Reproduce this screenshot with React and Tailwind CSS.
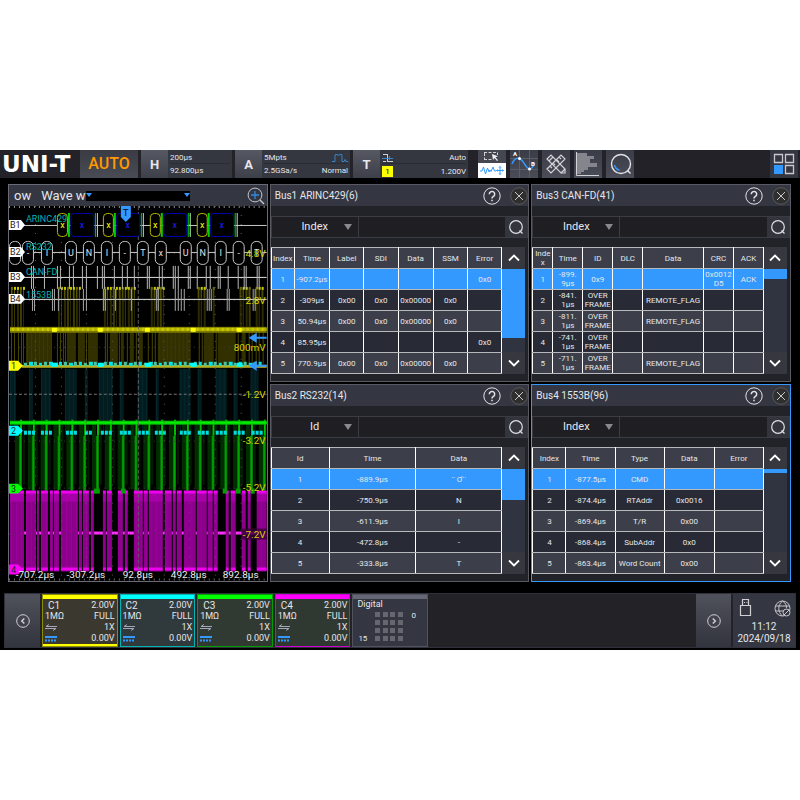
import { useState } from 'react'

const PANELS = [
  {
    title: 'Bus1 ARINC429(6)',
    filter: 'Index',
    cols: ['w-[23px]', 'w-[35px]', 'w-[34px]', 'w-[34px]', 'w-[35px]', 'w-[34px]', 'w-[34px]'],
    head: ['Index', 'Time', 'Label', 'SDI', 'Data', 'SSM', 'Error'],
    rows: [
      ['1', '-907.2μs', '', '', '', '', '0x0'],
      ['2', '-309μs', '0x00', '0x0', '0x00000', '0x0', ''],
      ['3', '50.94μs', '0x00', '0x0', '0x00000', '0x0', ''],
      ['4', '85.95μs', '', '', '', '', '0x0'],
      ['5', '770.9μs', '0x00', '0x0', '0x00000', '0x0', ''],
    ],
    thumb: 'h-[69px]',
  },
  {
    title: 'Bus3 CAN-FD(41)',
    filter: 'Index',
    cols: ['w-[20px]', 'w-[30px]', 'w-[30px]', 'w-[30px]', 'w-[61px]', 'w-[30px]', 'w-[30px]'],
    head: ['Inde\nx', 'Time', 'ID', 'DLC', 'Data', 'CRC', 'ACK'],
    rows: [
      ['1', '-899.\n9μs', '0x9', '', '', '0x0012\nD5', 'ACK'],
      ['2', '-841.\n1μs', 'OVER\nFRAME', '', 'REMOTE_FLAG', '', ''],
      ['3', '-811.\n1μs', 'OVER\nFRAME', '', 'REMOTE_FLAG', '', ''],
      ['4', '-741.\n1μs', 'OVER\nFRAME', '', '', '', ''],
      ['5', '-711.\n1μs', 'OVER\nFRAME', '', 'REMOTE_FLAG', '', ''],
    ],
    thumb: 'h-[10px]',
  },
  {
    title: 'Bus2 RS232(14)',
    filter: 'Id',
    cols: ['w-[58px]', 'w-[87px]', 'w-[86px]'],
    head: ['Id', 'Time', 'Data'],
    rows: [
      ['1', '-889.9μs', '¨ Ơ˙˙'],
      ['2', '-750.9μs', 'N'],
      ['3', '-611.9μs', 'I'],
      ['4', '-472.8μs', '-'],
      ['5', '-333.8μs', 'T'],
    ],
    thumb: 'h-[31px]',
  },
  {
    title: 'Bus4 1553B(96)',
    filter: 'Index',
    active: true,
    cols: ['w-[33px]', 'w-[49px]', 'w-[49px]', 'w-[50px]', 'w-[49px]'],
    head: ['Index', 'Time', 'Type', 'Data', 'Error'],
    rows: [
      ['1', '-877.5μs', 'CMD', '', ''],
      ['2', '-874.4μs', 'RTAddr', '0x0016', ''],
      ['3', '-869.4μs', 'T/R', '0x00', ''],
      ['4', '-868.4μs', 'SubAddr', '0x0', ''],
      ['5', '-863.4μs', 'Word Count', '0x00', ''],
    ],
    thumb: 'h-[4px]',
  },
]

const CHANNELS = [
  { name: 'C1', border: 'border-[#8c8c00]', bar: 'bg-[#ffff00]', bg: 'bg-[#3a382f]', selected: true },
  { name: 'C2', border: 'border-[#00b4b4]', bar: 'bg-[#00ffff]', bg: 'bg-[#30393c]' },
  { name: 'C3', border: 'border-[#00a000]', bar: 'bg-[#00ff00]', bg: 'bg-[#313a32]' },
  { name: 'C4', border: 'border-[#d000d0]', bar: 'bg-[#ff00ff]', bg: 'bg-[#303832]' },
]

// ---- trace data, in screen units of the plot ----
const WORDS = [57, 103, 150, 197]
const UART = [
  [9, ''], [22, '-'], [41, 'I'], [65, 'U'], [83, 'N'], [101, 'I'], [119, '-'],
  [137, 'T'], [155, 'x'], [180, 'U'], [197, 'N'], [215, 'I'], [233, '-'], [251, 'T'],
]
const CAN = [31, 33, 44, 57, 60, 69, 73, 82, 86, 97, 102, 104, 114, 122, 127, 134, 147, 149, 159, 162, 173, 175, 178, 188, 190, 197, 206, 210, 218, 220, 228, 238, 244, 246, 257, 259]
const MIL = [32, 34, 52, 54, 58, 83, 86, 103, 105, 115, 131, 156, 158, 175, 178, 181, 184, 207, 209, 211, 227, 229, 253, 255]
const BURSTS = [[11, 26], [58, 81], [104, 135], [151, 166], [198, 206], [213, 214], [240, 252], [256, 265]]
const C1_FILL = [[26, 52], [67, 76], [78, 85], [88, 98], [110, 118], [121, 124], [130, 134], [139, 143], [158, 191], [204, 214], [218, 236], [242, 246]]
const C1_LINES = [11, 14, 18, 21, 23, 57, 60, 63, 65, 86, 105, 107, 119, 127, 136, 148, 152, 155, 199, 202, 216, 238, 249, 252, 256, 259, 263]
const C2_FILL = [[10, 16], [29, 33], [41, 51], [65, 77], [85, 88], [99, 113], [120, 124], [138, 148], [156, 159], [180, 191], [198, 202], [216, 227], [234, 238], [251, 259]]
const C2_DASH = [[24, 33], [41, 51], [66, 76], [85, 93], [101, 112], [120, 130], [138, 147], [155, 165], [180, 191], [198, 208], [216, 226], [234, 243], [252, 261]]
const C4_GAPS = [[24, 26], [36, 37], [39, 41], [48, 50], [53, 54], [59, 61], [78, 79], [82, 83], [89, 91], [94, 103], [106, 107], [112, 118], [123, 125], [128, 134], [143, 144], [148, 149], [163, 165], [172, 173], [176, 177], [182, 184], [196, 197], [207, 208], [213, 214], [218, 226], [229, 231], [236, 242], [246, 248], [251, 257]]

const steps = (from, to, step) => {
  const out = []
  for (let x = from; x < to; x += step) out.push(x)
  return out
}

function Trace() {
  return (
    <svg viewBox="9 206 258 375" className="block h-auto w-full bg-black font-[Roboto,sans-serif]" role="img" aria-label="Waveform">
      {/* yellow channel */}
      {BURSTS.map(([a, b]) =>
        steps(a, b, 3).map((x, i) => (
          <g key={x}>
            <rect x={x} y="288" width={i % 3 === 1 ? 1 : 2} height="39" fill={i % 2 ? '#3d3b00' : '#2b2a00'} />
            <rect x={x} y="287" width="2" height="3" fill={i % 3 ? '#c8c800' : '#6c6c00'} />
            <rect x={x} y="290" width="1" height="8" fill="#5c5a00" />
          </g>
        ))
      )}
      {C1_FILL.map(([a, b]) => <rect key={a} x={a} y="333" width={b - a} height="31" fill="#333000" />)}
      {C1_LINES.map((x) => <rect key={x} x={x} y="333" width="1" height="31" fill="#4a4700" />)}
      {steps(27, 52, 4).map((x) => <rect key={x} x={x} y="333" width="1" height="31" fill="#3d3a00" />)}
      {steps(159, 191, 4).map((x) => <rect key={x} x={x} y="333" width="1" height="31" fill="#3d3a00" />)}
      <rect x="10" y="327" width="257" height="6" fill="#7c7a00" />
      <rect x="10" y="328" width="257" height="3" fill="#b4b200" />
      {steps(12, 266, 5).map((x) => <rect key={x} x={x} y="328" width="2" height="3" fill="#cccb00" />)}
      {[52, 98, 145, 191, 237].map((x) => <rect key={x} x={x} y="328" width="5" height="4" fill="#ffff00" />)}

      {/* cyan channel */}
      {C2_FILL.map(([a, b]) => <rect key={a} x={a} y="369" width={b - a} height="52" fill="#031c20" />)}
      {C2_FILL.map(([a, b]) => steps(a, b, 4).map((x) => <rect key={x} x={x} y="369" width="1" height="65" fill="#05282d" />))}
      <rect x="22" y="365" width="245" height="3" fill="#b5ae20" />
      {steps(24, 264, 5).map((x, i) => (
        <rect key={x} x={x} y={i % 3 ? 362 : 363} width={i % 4 === 1 ? 4 : 3} height={i % 3 ? 4 : 3} fill={i % 2 ? '#00e5e5' : '#48c4a0'} />
      ))}
      {[52, 98, 145, 191, 237].map((x) => <rect key={x} x={x} y="363" width="6" height="4" fill="#00ffff" />)}

      {/* green channel */}
      {steps(15, 266, 12.85).map((x) => (
        <g key={x}>
          <rect x={x} y="424" width="4" height="66" fill="#002e00" />
          <rect x={x + 8} y="425" width="2" height="60" fill="#001c00" />
          <rect x={x + 5} y="420" width="2" height="16" fill="#00c000" />
          <rect x={x + 4} y="436" width="3" height="55" fill="#008400" />
          <rect x={x + 5} y="436" width="1" height="56" fill="#00a800" />
        </g>
      ))}
      <rect x="10" y="421" width="257" height="4" fill="#00b800" />
      <rect x="10" y="422" width="257" height="2" fill="#00f000" />
      {C2_DASH.map(([a, b]) => steps(a, b, 4).map((x) => <rect key={x} x={x} y="431" width="3" height="4" fill="#00dede" />))}

      {/* magenta channel */}
      <rect x="10" y="491" width="257" height="81" fill="#8c008c" />
      {steps(11, 266, 5).map((x) => <rect key={x} x={x} y="494" width="1" height="74" fill="#9a009a" />)}
      <rect x="10" y="494" width="257" height="8" fill="#a800a8" />
      <rect x="10" y="491" width="257" height="3" fill="#f000f0" />
      <rect x="10" y="568" width="257" height="3" fill="#f000f0" />
      {C4_GAPS.map(([a, b]) => (
        <g key={a}>
          <rect x={a} y="490" width={b - a} height="83" fill="#000" />
          <rect x={a} y="532" width={b - a} height="3" fill="#ff30ff" />
        </g>
      ))}
      {[[94, 100], [121, 126], [223, 227], [236, 241], [251, 255]].map(([a, b]) => (
        <rect key={a} x={a} y="489" width={b - a} height="5" fill="#00a000" />
      ))}

      {/* graticule */}
      <g fill="none" stroke="#8a8a8a" strokeWidth="1">
        <path d="M9 207H267" strokeWidth="2" strokeDasharray="1 4" />
        <path d="M9 580H267" strokeWidth="2" strokeDasharray="1 4" stroke="#666" />
        <path d="M9 394.500H267" strokeDasharray="3 2" stroke="#747474" />
        <path d="M138.500 206V581" strokeDasharray="4 2" stroke="#5e5e5e" />
        {[253, 300, 347, 441, 488, 534].map((y) => (
          <path key={y} d={`M9 ${y}.5H267`} strokeDasharray="1 4" stroke="#3c3c3c" />
        ))}
        {[35, 61, 86, 112, 164, 189, 215, 241].map((x) => (
          <path key={x} d={`M${x}.5 206V581`} strokeDasharray="1 8" stroke="#5c5c5c" />
        ))}
      </g>

      {/* bus 1 */}
      <path d="M22 225.500H267" stroke="#c8c8c8" />
      {WORDS.map((x) => (
        <g key={x} fill="#000" fontSize="9" textAnchor="middle">
          <rect x={x + 0.5} y="213.500" width="10" height="23" rx="4" stroke="#b8b800" />
          <rect x={x + 14} y="213.500" width="23" height="23" rx="3" stroke="#0000b0" />
          <rect x={x + 11} y="213" width="2" height="24" fill="#00d000" />
          <rect x={x + 38} y="213" width="1" height="24" fill="#00d000" />
          <rect x={x + 40} y="213" width="1" height="24" fill="#b0e8b0" />
          <text x={x + 5.5} y="228" fill="#ffff00">x</text>
          <text x={x + 25} y="228" fill="#2020ff">x</text>
        </g>
      ))}

      {/* bus 2 */}
      <path d="M22 252.500H267" stroke="#c8c8c8" />
      {UART.map(([x, ch]) => (
        <g key={x}>
          <rect x={x + 0.5} y="241.500" width="11" height="23" rx="5" fill="#000" stroke="#c8c8c8" />
          <text x={x + 6} y="256" fill="#e0e0e0" fontSize="9" textAnchor="middle">{ch}</text>
        </g>
      ))}

      {/* bus 3 and 4 */}
      <rect x="22" y="277" width="245" height="1" fill="#e0e0e0" />
      {CAN.map((x) => <rect key={x} x={x} y="266" width="1" height="23" fill="#b8b8b8" />)}
      <rect x="22" y="299" width="245" height="1" fill="#e0e0e0" />
      {MIL.map((x) => <rect key={x} x={x} y="289" width="1" height="22" fill="#a8a8a8" />)}

      <g fill="#00b4b4" fontSize="9">
        <text x="26" y="222">ARINC429</text>
        <text x="26" y="250">RS232</text>
        <text x="26" y="275">CAN-FD</text>
        <text x="26" y="298">1553B</text>
      </g>
      {[225, 252, 277, 299].map((y, i) => (
        <g key={y}>
          <path d={`M9 ${y - 5}h12l4 5l-4 5H9z`} fill="#fff" />
          <text x="10" y={y + 3} fontSize="9" fill="#222">B{i + 1}</text>
        </g>
      ))}
      {[[366, '#ffff00'], [431, '#00ffff'], [489, '#00ff00'], [570, '#ff00ff']].map(([y, fill], i) => (
        <g key={y}>
          <path d={`M9 ${y - 5}h9l5 5l-5 5H9z`} fill={fill} />
          <text x="11" y={y + 3} fontSize="9" fill="#222">{i + 1}</text>
        </g>
      ))}

      {/* trigger */}
      <path d="M121 206h10v11l-5 5l-5-5z" fill="#3399ff" />
      <text x="126" y="216" fontSize="10" fill="#111" textAnchor="middle">T</text>
      {[338, 366].map((y) => (
        <path key={y} d={`M249 ${y}l8-5v4h10v2h-10v4z`} fill="#3399ff" />
      ))}

      <rect x="242" y="529" width="25" height="11" fill="#380038" opacity="0.800" />
      <g fill="#d8d400" fontSize="10" textAnchor="end">
        <text x="266" y="257">4.8V</text>
        <text x="266" y="304">2.8V</text>
        <text x="266" y="351">800mV</text>
        <text x="266" y="398">-1.2V</text>
        <text x="266" y="444">-3.2V</text>
        <text x="266" y="491">-5.2V</text>
        <text x="266" y="538">-7.2V</text>
      </g>
      <g fill="#f0f0f0" fontSize="10" textAnchor="middle">
        <text x="35" y="579">-707.2μs</text>
        <text x="86" y="579">-307.2μs</text>
        <text x="138" y="579">92.8μs</text>
        <text x="189" y="579">492.8μs</text>
        <text x="241" y="579">892.8μs</text>
      </g>
    </svg>
  )
}

function WavePanel() {
  return (
    <section className="row-span-2 border border-[#6a6b75] bg-black">
      <header className="flex h-[21px] items-center bg-[#343641] pr-0.5 pl-[5px] text-[13px] text-gray-200">
        <span className="mr-[10px]">ow</span>
        <span>Wave w</span>
        <div className="flex h-[10px] w-[104px] items-start justify-between bg-black pt-0.5">
          <svg className="h-1 w-[6px]" viewBox="0 0 6 4"><path d="M0 0h6L3 4z" fill="#3399ff" /></svg>
          <svg className="h-1 w-[6px]" viewBox="0 0 6 4"><path d="M0 0h6L3 4z" fill="#3399ff" /></svg>
        </div>
        <button type="button" aria-label="Zoom" className="ml-auto">
          <svg className="block size-[18px]" viewBox="0 0 18 18" fill="none" stroke="#c4c6cc">
            <circle cx="8" cy="8" r="6.900" />
            <path d="M13 13l4 4" strokeWidth="1.500" />
            <path d="M8 4v8M4 8h8" stroke="#2f8ae0" strokeWidth="1.300" />
          </svg>
        </button>
      </header>
      <Trace />
    </section>
  )
}

function BusPanel({ panel }) {
  const [filter, setFilter] = useState(panel.filter)
  const [query, setQuery] = useState('')

  return (
    <section className={`min-w-0 border bg-[#222229] pb-[7px] ${panel.active ? 'border-[#3399ff]' : 'border-[#585962]'}`}>
      <header className="flex h-[21px] items-center bg-[#343641] pl-1">
        <h2 className="text-[10px] whitespace-nowrap text-gray-200">{panel.title}</h2>
        <button type="button" aria-label="Help" className="mr-[9px] ml-auto">
          <svg className="block size-[18px]" viewBox="0 0 18 18" fill="none" stroke="#e4e4e8">
            <circle cx="9" cy="9" r="8.200" />
            <path d="M6.300 7.200a2.700 2.700 0 1 1 4.300 2.100c-1 .7-1.600 1-1.600 2.100M9 12.700v1.500" strokeWidth="1.500" />
          </svg>
        </button>
        <button type="button" aria-label="Close">
          <svg className="block size-[18px]" viewBox="0 0 18 18">
            <circle cx="9" cy="9" r="8.300" fill="#302f2f" stroke="#5a5958" />
            <path d="M5 5l8 8M13 5l-8 8" stroke="#c8c8c8" />
          </svg>
        </button>
      </header>

      <div className="mt-[10px] flex h-[22px] border border-[#3b3c43] bg-[#1f1e22]">
        <div className="relative w-[87px] border-r border-[#3b3c43]">
          <select
            aria-label="Search column"
            value={filter}
            onChange={(event) => setFilter(event.target.value)}
            className="block size-full appearance-none text-center text-[11px] text-gray-200 outline-none"
          >
            {panel.head.map((name) => name.replace('\n', '')).map((name) => (
              <option key={name}>{name}</option>
            ))}
          </select>
          <svg className="pointer-events-none absolute top-[7px] right-[6px] h-[6px] w-2" viewBox="0 0 8 6">
            <path d="M0 0h8L4 6z" fill="#8a8a8c" />
          </svg>
        </div>
        <input
          aria-label="Search text"
          value={query}
          onChange={(event) => setQuery(event.target.value)}
          className="min-w-0 flex-1 px-1 text-[11px] text-gray-200 outline-none"
        />
        <button type="button" aria-label="Search" className="flex w-[22px] items-center justify-center bg-[#33353d]">
          <svg className="size-4" viewBox="0 0 16 16" fill="none" stroke="#e0e0e4" strokeWidth="1.200">
            <circle cx="8" cy="8" r="6.300" />
            <path d="M11.500 11.500l3 3" />
          </svg>
        </button>
      </div>

      <div className="mt-[9px] flex h-[127px] pr-[3px]">
        <table className="h-[127px] min-w-0 flex-1 table-fixed border-collapse text-center text-[8px] leading-[9px] whitespace-pre text-gray-200">
          <colgroup>
            {panel.cols.map((width, i) => <col key={i} className={width} />)}
          </colgroup>
          <thead>
            <tr className="h-[21px] bg-[#3c3f49]">
              {panel.head.map((name) => (
                <th key={name} className="border border-x-white border-y-[#b8b9bd] p-0 font-normal">{name}</th>
              ))}
            </tr>
          </thead>
          <tbody>
            {panel.rows.map((row, r) => (
              <tr key={row[0]} className={`h-[21px] ${r === 0 ? 'bg-[#3399ff]' : r % 2 ? 'bg-[#282b36]' : 'bg-[#3c3f49]'}`}>
                {row.map((cell, i) => (
                  <td key={i} className="border border-x-white border-y-[#b8b9bd] p-0">{cell}</td>
                ))}
              </tr>
            ))}
          </tbody>
        </table>
        <div className="flex w-[23px] flex-col bg-[#303440]">
          <button type="button" aria-label="Scroll up" className="flex h-[22px] items-center justify-center bg-[#37383f]">
            <svg className="h-2 w-3" viewBox="0 0 12 8" fill="none" stroke="#fff" strokeWidth="1.800"><path d="M1 6.500l5-5l5 5" /></svg>
          </button>
          <div className={`bg-[#3399ff] ${panel.thumb}`} />
          <button type="button" aria-label="Scroll down" className="mt-auto flex h-[22px] items-center justify-center bg-[#37383f]">
            <svg className="h-2 w-3" viewBox="0 0 12 8" fill="none" stroke="#fff" strokeWidth="1.800"><path d="M1 1.500l5 5l5-5" /></svg>
          </button>
        </div>
      </div>
    </section>
  )
}

function Setting({ letter, width, children }) {
  return (
    <div className={`flex h-7 shrink-0 text-[8px] leading-[13px] text-gray-200 ${width}`}>
      <button type="button" className="w-[27px] shrink-0 bg-linear-to-b from-[#565963] to-[#3d3f49] text-[13px] font-bold">{letter}</button>
      <div className="grid flex-1 grid-rows-2 bg-[#343640] px-0.5">{children}</div>
    </div>
  )
}

const toolClass = 'flex size-7 shrink-0 items-center justify-center bg-linear-to-b from-[#3a3d47] to-[#4a4d58]'

function TopBar() {
  return (
    <header className="flex h-7 items-center bg-[#222228]">
      <div className="w-20 shrink-0 pl-0.5 font-['DejaVu_Sans',sans-serif] text-[23px] leading-7 font-bold whitespace-nowrap text-white">UNI-T</div>
      <button type="button" className="mr-[3px] h-7 w-[58px] shrink-0 bg-linear-to-b from-[#3a3b43] to-[#4a4c55] text-[16px] font-medium text-[#ff9900]">AUTO</button>
      <div className="flex gap-[3px]">
        <Setting letter="H" width="w-[91px]">
          <span className="border-b border-[#2a2c35] pt-px">200μs</span>
          <span>92.800μs</span>
        </Setting>
        <Setting letter="A" width="w-[115px]">
          <span className="flex justify-between border-b border-[#2a2c35] pt-px">
            5Mpts
            <svg className="mt-0.5 h-[10px] w-4" viewBox="0 0 16 10" fill="none" stroke="#3584cc">
              <path d="M0 8.500h3V2l1-1 1 1h3l1-1 1 1v6.500h2l1-2 1 2h2" />
            </svg>
          </span>
          <span className="flex justify-between">2.5GSa/s<span>Normal</span></span>
        </Setting>
        <Setting letter="T" width="w-[115px]">
          <span className="flex justify-between border-b border-[#2a2c35] pt-px">
            <svg className="mt-0.5 h-[10px] w-[11px]" viewBox="0 0 11 10" fill="none" stroke="#d0d0d4">
              <path d="M1 1.500h4M6 8.500h5M1 8.500h3M5.500 1v8" />
              <path d="M0 5.500h11M7.500 3v4" stroke="#3584cc" />
            </svg>
            Auto
          </span>
          <span className="flex items-center justify-between">
            <span className="w-[11px] bg-[#ffff00] text-center leading-[11px] text-black">1</span>
            1.200V
          </span>
        </Setting>
      </div>

      <div className="ml-[10px] flex gap-1">
        <button type="button" aria-label="Zone select" className="size-7 shrink-0">
          <svg className="block size-7" viewBox="0 0 28 28" fill="none">
            <path d="M0 0h28v13H0z" fill="#444650" />
            <path d="M0 13h28v15H0z" fill="#fff" />
            <path d="M6 2.500h14M6 9.500h8M6.500 3v7M19.500 3v2" stroke="#d0d0d4" strokeDasharray="3 1.500" />
            <path d="M14 4l6 2.200-2.500 1 2.500 3-1 .8-2.500-3-1.500 2z" fill="#f0f0f0" />
            <path d="M2 21h2l1.500-4 2 7 2-6 1.500 4 1-2 1 1.500L15 17l1.500 4H18" stroke="#3399ff" />
            <path d="M22 16.500v8M18.500 20.500h7M21 17.500l1-1 1 1M21 23.500l1 1 1-1M19.500 19.500l-1 1 1 1M24.500 19.500l1 1-1 1" stroke="#3399ff" />
          </svg>
        </button>
        <button type="button" aria-label="Cursor" className={toolClass}>
          <svg className="block size-7" viewBox="0 0 28 28" fill="none">
            <path d="M9.500 0v28M19.500 0v28M0 8.500h28M0 19.500h28" stroke="#5c5e67" />
            <path d="M2 14C4 9 6.500 7.500 9.500 8.500c5 2 5 9 10 10.500 3 0 4-3 5-6" stroke="#3399ff" strokeWidth="1.500" />
            <circle cx="9.500" cy="8.500" r="1.500" fill="#fff" />
            <circle cx="19.500" cy="19" r="1.500" fill="#fff" />
            <text x="3" y="6" fill="#fff" fontSize="6" fontWeight="700">A</text>
            <text x="21" y="16" fill="#fff" fontSize="6" fontWeight="700">B</text>
          </svg>
        </button>
        <button type="button" aria-label="Measure" className={toolClass}>
          <svg className="size-[22px]" viewBox="0 0 22 22" fill="none" stroke="#d4d4d8" strokeWidth="1.200">
            <path d="M2 6l4-4 14 14v4h-4z" />
            <path d="M2 16L16 2l4 4L6 20zM5 13l2 2M8 10l2 2M12 7l2 2M14 4l2 2M4 8l4-4M16 20l4-4" />
          </svg>
        </button>
        <button type="button" aria-label="Histogram" className={toolClass}>
          <svg className="block size-7" viewBox="0 0 28 28">
            <path d="M3 3h10v3H3zM3 6h17v3H3zM3 9h13v4H3zM3 13h20v4H3zM3 17h11v3H3zM3 20h7v2H3zM3 22h4v2H3z" fill="#85868d" />
            <path d="M2.500 2v23.500H25" fill="none" stroke="#d4d4d8" />
          </svg>
        </button>
        <button type="button" aria-label="Search" className={toolClass}>
          <svg className="block size-7" viewBox="0 0 28 28" fill="none" stroke="#e4e4e8" strokeWidth="1.400">
            <circle cx="15" cy="14" r="9.500" />
            <path d="M21.500 20.500l3 3" />
            <path d="M8.500 15c.6 2.600 2 4.500 5 5.200" stroke="#3399ff" />
          </svg>
        </button>
      </div>

      <button type="button" aria-label="Layout" className="mr-0.5 ml-auto flex size-7 items-center justify-center bg-[#343641]">
        <svg className="size-[22px]" viewBox="0 0 22 22" fill="none" stroke="#c8c8cc">
          <path d="M1.500 1.500h8v8h-8zM12.500 1.500h8v8h-8zM12.500 12.500h8v8h-8z" strokeWidth="1.300" />
          <path d="M1 12h9v9H1z" fill="#3399ff" stroke="none" />
        </svg>
      </button>
    </header>
  )
}

function ChannelCard({ channel }) {
  return (
    <button type="button" className={`flex min-w-0 flex-1 flex-col border text-[9px] leading-[11px] text-gray-200 ${channel.border} ${channel.bg}`}>
      <span className={`mb-px h-1 w-full shrink-0 ${channel.bar}`} />
      <span className="flex w-full justify-between pr-0.5 pl-[5px]"><span className="text-[10px]">{channel.name}</span>2.00V</span>
      <span className="flex w-full justify-between px-0.5">1MΩ<span>FULL</span></span>
      <span className="flex w-full items-center justify-between px-0.5">
        <svg className="h-[7px] w-3" viewBox="0 0 12 7" fill="none" stroke="#a4a5b8"><path d="M12 2.500H1L4 .5M0 4.500h11L8 6.500" /></svg>
        1X
      </span>
      <span className="flex w-full items-center justify-between px-0.5">
        <svg className="h-[6px] w-3" viewBox="0 0 12 6" fill="none" stroke="#3399ff"><path d="M0 1h12" strokeWidth="2" /><path d="M0 4.500h12" strokeDasharray="2 1" strokeWidth="2" /></svg>
        0.00V
      </span>
      {channel.selected && <span className={`mt-auto h-0.5 w-full shrink-0 ${channel.bar}`} />}
    </button>
  )
}

function BottomBar() {
  return (
    <footer className="mx-1 flex h-[55px] border border-[#30313c] bg-[#222227] text-gray-200">
      <button type="button" aria-label="Previous" className="flex w-[35px] shrink-0 items-center justify-center bg-linear-to-b from-[#50525b] to-[#32343e]">
        <svg className="size-[14px]" viewBox="0 0 14 14" fill="none" stroke="#d0d0d4"><circle cx="7" cy="7" r="6.300" /><path d="M8.300 4.500L5.800 7l2.500 2.500" strokeWidth="1.500" /></svg>
      </button>
      <div className="ml-0.5 flex w-[386px] shrink-0 gap-0.5">
        {CHANNELS.map((channel) => <ChannelCard key={channel.name} channel={channel} />)}
        <button type="button" className="flex min-w-0 flex-1 flex-col border border-[#50525d] bg-[#343641] text-left text-[8px] leading-[10px]">
          <span className="h-1 w-full bg-[#666776]" />
          <span className="px-1 text-[9px] leading-[11px]">Digital</span>
          <span className="flex h-[34px] w-full items-start justify-between pt-px pr-[11px] pl-[5px]">
            <span className="self-end">15</span>
            <svg className="h-[30px] w-7" viewBox="0 0 28 30" fill="#65666f">
              {[1, 9, 17, 25].map((y) => [0, 8, 15, 23].map((x) => <rect key={x + y * 30} x={x} y={y} width="5" height="5" />))}
            </svg>
            <span>0</span>
          </span>
        </button>
      </div>
      <button type="button" aria-label="Next" className="ml-auto flex w-[35px] shrink-0 items-center justify-center bg-linear-to-b from-[#50525b] to-[#32343e]">
        <svg className="size-[14px]" viewBox="0 0 14 14" fill="none" stroke="#d0d0d4"><circle cx="7" cy="7" r="6.300" /><path d="M5.800 4.500L8.300 7l-2.500 2.500" strokeWidth="1.500" /></svg>
      </button>
      <div className="ml-0.5 w-[62px] shrink-0 bg-[#343641] px-1 pt-1 text-center text-[10px] leading-3">
        <div className="mb-1 flex items-end justify-between pl-0.5">
          <svg className="h-[19px] w-[13px]" viewBox="0 0 13 19" fill="none" stroke="#d0d0d4"><path d="M3.500 7V1.500h6V7M1.500 7.500h10v10h-10z" strokeWidth="1.200" /><path d="M5 4.500h1M7.500 4.500h1" /></svg>
          <svg className="size-[17px]" viewBox="0 0 17 17" fill="none" stroke="#c8c8cc">
            <circle cx="8.500" cy="8.500" r="7.500" />
            <path d="M8.500 1C3.500 5 3.500 12 8.500 16M8.500 1c3 2 4 4 4 7M1.500 6h14M1.500 11h8" />
            <circle cx="12.500" cy="12.500" r="3.500" fill="#343641" />
            <path d="M10 15l5-5" />
          </svg>
        </div>
        <div>11:12</div>
        <div className="whitespace-nowrap">2024/09/18</div>
      </div>
    </footer>
  )
}

export default function App() {
  return (
    <div className="flex min-h-screen items-center bg-white font-[Roboto,'Liberation_Sans',sans-serif]">
      <main className="w-full bg-black pb-0.5">
        <TopBar />
        <div className="mt-[6px] mb-[11px] grid grid-cols-3 gap-0.5 pr-[9px] pl-2">
          <WavePanel />
          {PANELS.map((panel) => <BusPanel key={panel.title} panel={panel} />)}
        </div>
        <BottomBar />
      </main>
    </div>
  )
}
